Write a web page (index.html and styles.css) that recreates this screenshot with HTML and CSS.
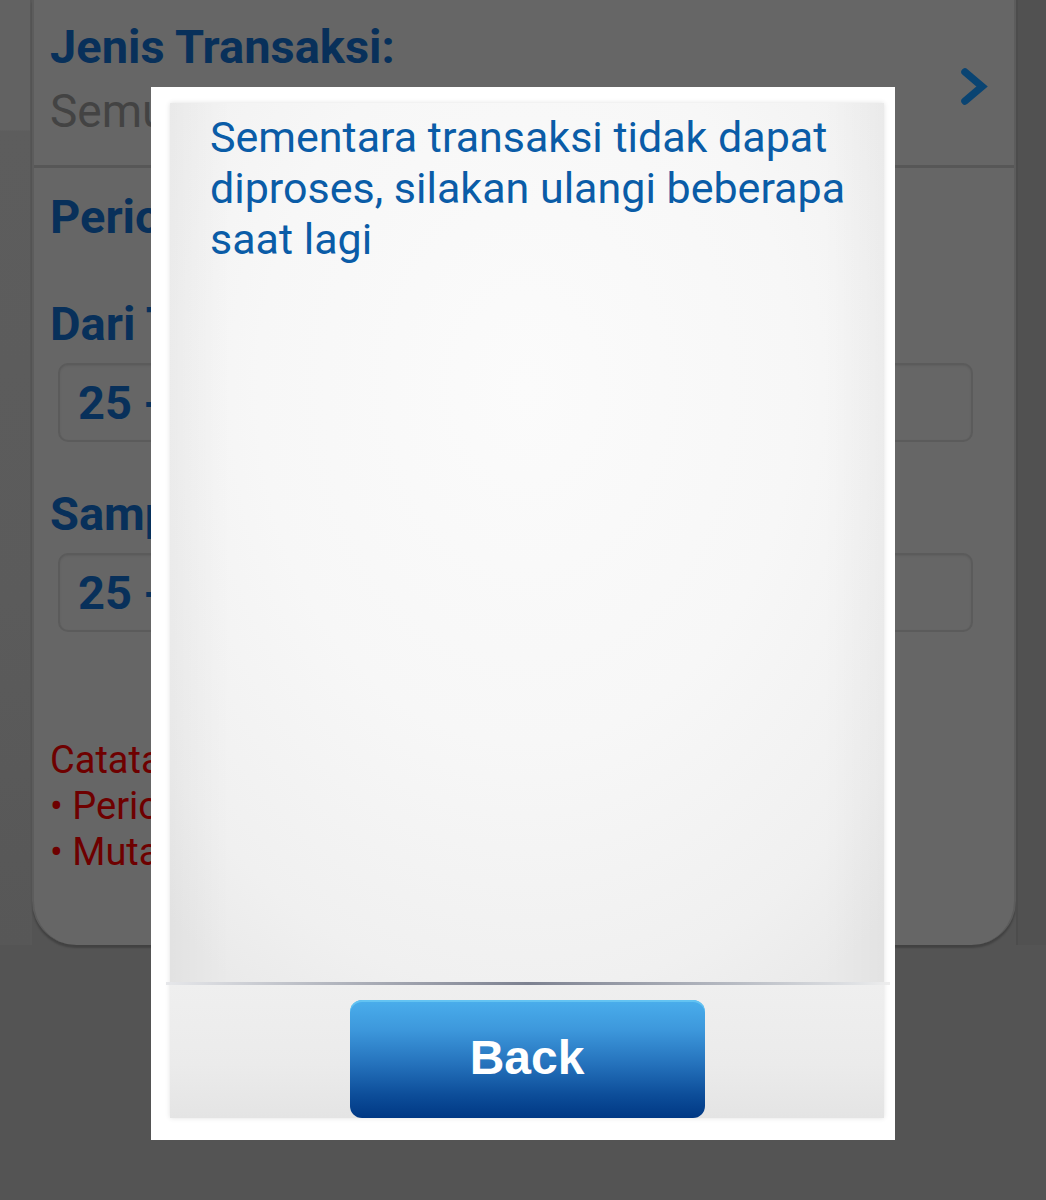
FILE: index.html
```html
<!DOCTYPE html>
<html lang="id">
<head>
<meta charset="utf-8">
<title>Mutasi Rekening</title>
<link rel="stylesheet" href="styles.css">
</head>
<body>
<div class="screen">
  <div class="side side-left"></div>
  <main class="card">
    <section class="row row-type">
      <div class="row-text">
        <div class="label">Jenis Transaksi:</div>
        <div class="value">Semua</div>
      </div>
      <svg class="chevron" width="30" height="40" viewBox="0 0 30 40" aria-hidden="true">
        <polyline points="6,5 23,19.5 6,34" fill="none" stroke="#0a4472" stroke-width="7.5" stroke-linejoin="miter" stroke-linecap="round"/>
      </svg>
    </section>
    <section class="row row-period">
      <div class="label">Periode Transaksi:</div>
      <div class="label label-field">Dari Tanggal:</div>
      <div class="input"><span>25 - 10 - 2018</span></div>
      <div class="label label-field2">Sampai Tanggal:</div>
      <div class="input"><span>25 - 10 - 2018</span></div>
      <div class="notes">
        <div>Catatan:</div>
        <div>• Periode transaksi maksimal 31 hari</div>
        <div>• Mutasi rekening 31 hari terakhir</div>
      </div>
    </section>
  </main>
  <div class="side side-right"></div>
</div>

<div class="modal">
  <div class="panel">
    <div class="message">Sementara transaksi tidak dapat diproses, silakan ulangi beberapa saat lagi</div>
    <div class="divider"></div>
    <div class="footer">
      <button class="btn-back" type="button">Back</button>
    </div>
  </div>
</div>
</body>
</html>
```

FILE: styles.css
```css
html, body {
  margin: 0;
  padding: 0;
}
body {
  width: 1046px;
  height: 1200px;
  overflow: hidden;
  background: #545454;
  font-family: Roboto, "Noto Sans", "Liberation Sans", sans-serif;
  position: relative;
}

.screen {
  display: flex;
  height: 945px;
}
.side {
  height: 100%;
}
.side-left {
  width: 30px;
  background: linear-gradient(#626262 0, #626262 130px, #5d5d5d 131px, #5b5b5b 600px, #575757 945px);
  border-right: 2px solid #585858;
}
.side-right {
  flex: 1;
  background: #515151;
  border-left: 2px solid #4c4c4c;
}

.card {
  width: 980px;
  background: #666666;
  border-left: 2px solid #5c5c5c;
  border-right: 2px solid #5c5c5c;
  border-radius: 0 0 44px 44px;
  box-shadow: 0 3px 2px rgba(0, 0, 0, 0.22);
  display: flex;
  flex-direction: column;
}

.row {
  padding-left: 16px;
}
.row-type {
  height: 168px;
  box-sizing: border-box;
  padding-top: 19px;
  padding-right: 25px;
  border-bottom: 3px solid #575757;
  display: flex;
  justify-content: space-between;
  align-items: flex-start;
}
.chevron {
  margin-top: 48px;
}

.label {
  font-size: 47px;
  line-height: 56px;
  font-weight: 700;
  color: #08305a;
  white-space: nowrap;
}
.value {
  margin-top: 8px;
  font-size: 46px;
  line-height: 56px;
  color: #434343;
  white-space: nowrap;
}

.row-period {
  padding-top: 21px;
  padding-right: 41px;
  display: flex;
  flex-direction: column;
}
.label-field {
  margin-top: 51px;
}
.label-field2 {
  margin-top: 44px;
}
.input {
  margin-top: 11px;
  margin-left: 8px;
  height: 79px;
  box-sizing: border-box;
  border: 2px solid #5b5b5b;
  border-radius: 10px;
  box-shadow: inset 0 1px 2px rgba(0, 0, 0, 0.08);
  display: flex;
  align-items: center;
  padding-left: 18px;
}
.input span {
  font-size: 47px;
  line-height: 56px;
  font-weight: 700;
  color: #08305a;
  white-space: nowrap;
}
.notes {
  margin-top: 105px;
  font-size: 38px;
  line-height: 46px;
  color: #6e0000;
  white-space: nowrap;
}

/* Dialog */
.modal {
  position: absolute;
  left: 151px;
  top: 87px;
  width: 744px;
  height: 1053px;
  box-sizing: border-box;
  background: #ffffff;
  padding: 16px 11px 22px 19px;
  display: flex;
}
.panel {
  flex: 1;
  display: flex;
  flex-direction: column;
  background:
    linear-gradient(to right, rgba(0,0,0,0.035) 0, rgba(0,0,0,0) 60px, rgba(0,0,0,0) 654px, rgba(0,0,0,0.03) 100%),
    radial-gradient(ellipse 75% 70% at 50% 28%, #fbfbfb 0%, #f7f7f7 50%, #f0f0f0 85%, #eaeaea 100%);
  box-shadow: 0 0 5px rgba(0, 0, 0, 0.12);
}
.message {
  flex: 1;
  padding: 9px 12px 0 40px;
  font-size: 43px;
  line-height: 51px;
  color: #0a5ca7;
}
.divider {
  height: 3px;
  margin-right: -6px;
  margin-left: -4px;
  background: linear-gradient(to right, #e6e7ea 0%, #b9bcc4 20%, #7c8190 50%, #b6bac2 78%, #dfe1e4 95%, #eeeeee 100%);
}
.footer {
  height: 133px;
  box-sizing: border-box;
  padding-top: 14px;
  display: flex;
  justify-content: center;
  align-items: flex-end;
  background: linear-gradient(to bottom, #efefef 0%, #ebebeb 60%, #e4e4e4 100%);
}
.btn-back {
  width: 355px;
  height: 118px;
  border: none;
  border-radius: 12px;
  padding: 0 0 4px 0;
  margin: 0;
  background: linear-gradient(to bottom, #4aaeec 0%, #3d98dc 25%, #2471bb 55%, #0d4e9a 80%, #003884 100%);
  box-shadow: inset 0 2px 0 #63c3f2;
  color: #ffffff;
  font-family: "Liberation Sans", Arial, sans-serif;
  font-weight: 700;
  font-size: 48px;
}
```
